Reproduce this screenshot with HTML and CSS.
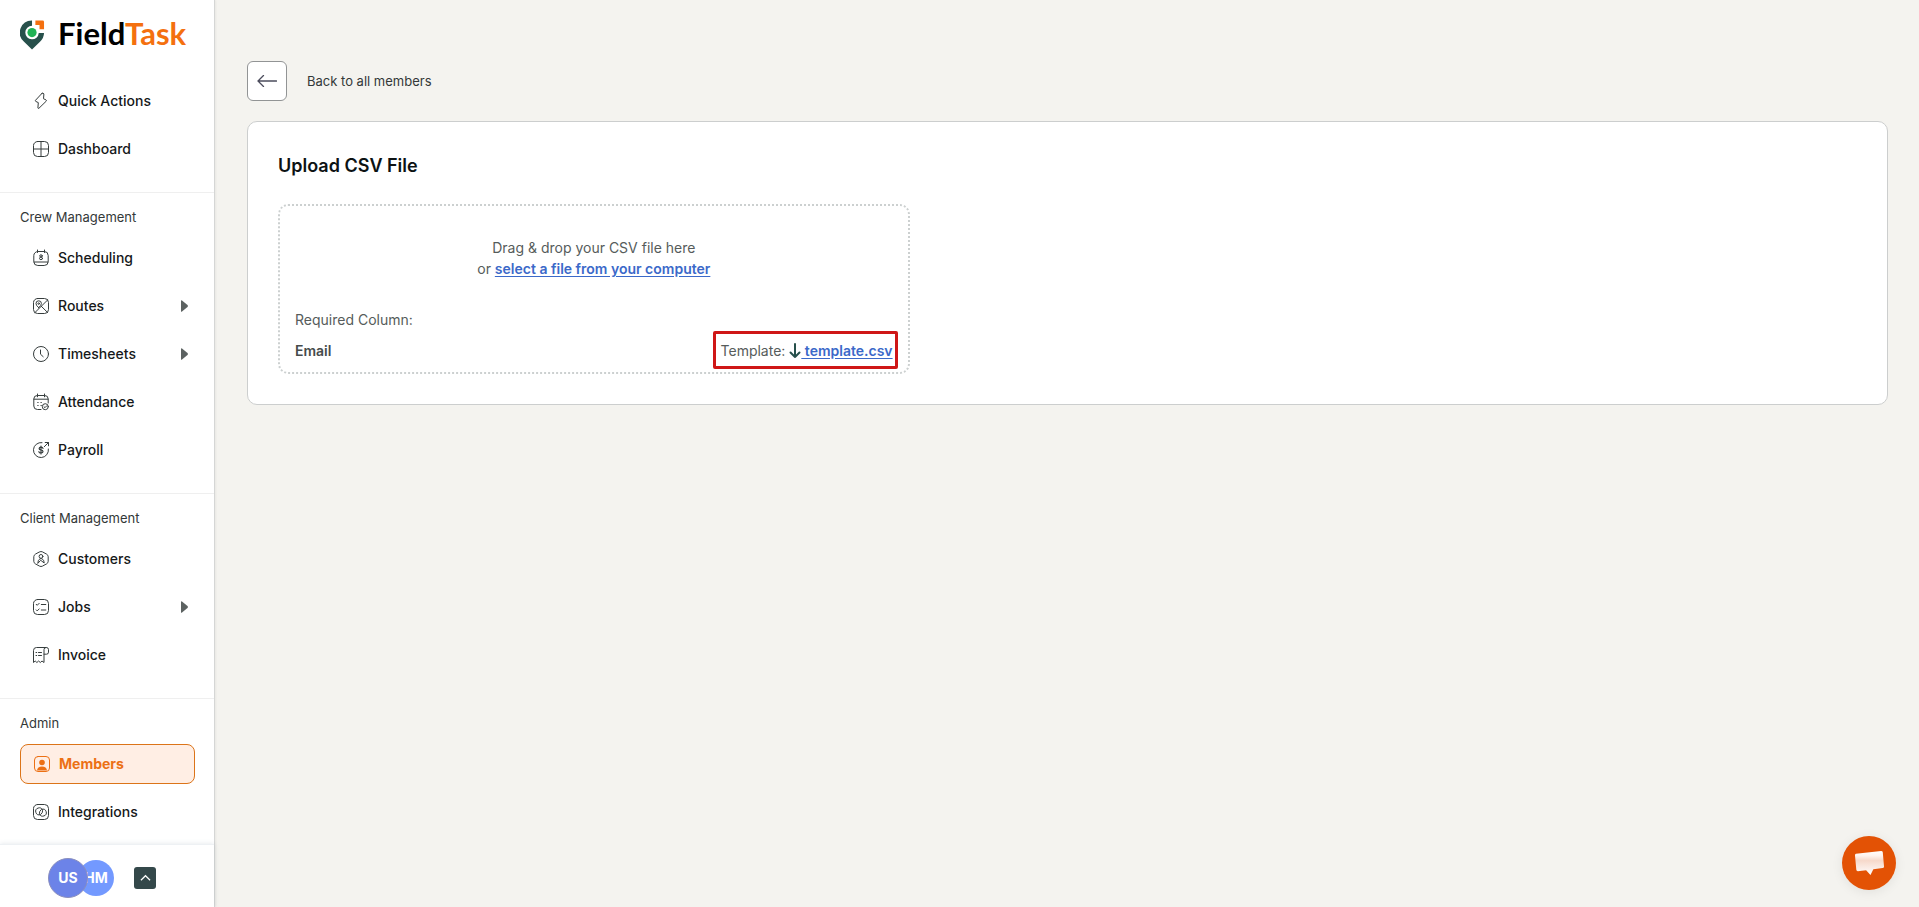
FILE: index.html
```html
<!DOCTYPE html>
<html lang="en">
<head>
<meta charset="utf-8">
<meta name="viewport" content="width=device-width, initial-scale=1">
<title>FieldTask - Upload members</title>
<link rel="stylesheet" href="styles.css">
</head>
<body>
<div class="app">
  <aside class="sidebar">
    <a class="logo" href="#">
      <svg class="logo-mark" viewBox="0 0 26 30" aria-hidden="true">
        <path d="M12.500 0A12.500 12.500 0 0 0 4.200 22L12.500 30l8.300-8A12.500 12.500 0 0 0 25 13h-5.500A7 7 0 1 1 12.500 5.500z" fill="#27504b"/>
        <circle cx="12.500" cy="12.500" r="4.800" fill="#1fb254"/>
        <path d="M16 0h7.500Q25 0 25 1.500V9h-4.700V4.700H16z" fill="#f4700f"/>
      </svg>
      <span class="logo-text">Field<span class="logo-accent">Task</span></span>
    </a>
    <nav class="nav">
      <section class="group">
        <a class="item" href="#">
          <svg class="icon" viewBox="0 0 16 16"><path d="M9 .3 2.500 7.300q-.5.700.2 1.100l2.600 1.200-.4 5.400q.3.900 1.100.2l7.200-7q.6-.7-.1-1.200L10.500 5.700l.4-4.800Q10.200-.7 9 .3z"/></svg>Quick Actions</a>
        <a class="item" href="#">
          <svg class="icon" viewBox="0 0 16 16"><rect x=".5" y=".5" width="15" height="15" rx="4"/><path d="M8 .5v15M.5 8h15"/></svg>Dashboard</a>
      </section>
      <section class="group">
        <h2 class="group-title">Crew Management</h2>
        <a class="item" href="#">
          <svg class="icon" viewBox="0 0 16 16"><rect x=".8" y="1.500" width="14.400" height="14" rx="4"/><path d="M4.500 0v2.500M11.500 0v2.500M1 12h14"/><ellipse cx="8" cy="5.900" rx="1.300" ry="1.100"/><ellipse cx="8" cy="8.400" rx="1.500" ry="1.300"/></svg>Scheduling</a>
        <a class="item" href="#">
          <svg class="icon" viewBox="0 0 16 16"><rect x=".5" y=".5" width="15" height="15" rx="4"/><path d="M2 14.500 14.800 1.800M8.300 8.300l6.300 6.200M5.700 9.700Q2.800 7.300 3 5.500a2.700 2.700 0 0 1 5.400 0Q8.400 7.300 5.700 9.700z"/><circle cx="5.700" cy="5.600" r=".8"/></svg>Routes<svg class="caret" viewBox="0 0 7 12" aria-hidden="true"><path d="M0 1Q0-.3 1 .4L6.500 5q.8 1 0 2L1 11.600Q0 12.300 0 11z"/></svg></a>
        <a class="item" href="#">
          <svg class="icon" viewBox="0 0 16 16"><circle cx="8" cy="8" r="7.500"/><path d="M7.500 4v4.200l2.700 2.500"/></svg>Timesheets<svg class="caret" viewBox="0 0 7 12" aria-hidden="true"><path d="M0 1Q0-.3 1 .4L6.500 5q.8 1 0 2L1 11.600Q0 12.300 0 11z"/></svg></a>
        <a class="item" href="#">
          <svg class="icon" viewBox="0 0 16 16"><path d="M8 15.500H4.500Q.8 15.500.8 12V5q0-3.500 3.500-3.500h7.400q3.500 0 3.500 3.500v4M4.500 0v2.800M11.500 0v2.800M1 5.200h14"/><circle cx="12.300" cy="12.700" r="3"/><path d="m11 12.700 1 1 1.700-1.900"/><path d="M4.800 8.500h.3M8 8.500h.3M4.800 11.500h.3M8 11.500h.3" stroke-width="1.200"/></svg>Attendance</a>
        <a class="item" href="#">
          <svg class="icon" viewBox="0 0 16 16"><path d="M9 .6a7.500 7.500 0 1 0 6.400 6.400M11.300 4.700 15.500.5M12.200.5h3.300v3.300"/><path d="M10 6.300Q9.700 5.200 8 5.200t-1.900 1.400Q6.100 7.900 8 8t2 1.500Q10 11 8 11T5.900 9.700M8 4v8" stroke-width="1.200"/></svg>Payroll</a>
      </section>
      <section class="group">
        <h2 class="group-title">Client Management</h2>
        <a class="item" href="#">
          <svg class="icon" viewBox="0 0 16 16"><path d="M6.500.9q1.500-.8 3 0l4.200 2.300q1.500.9 1.500 2.500v4.600q0 1.600-1.500 2.500l-4.200 2.300q-1.500.8-3 0l-4.200-2.300Q.8 11.900.8 10.300V5.700q0-1.600 1.500-2.500z"/><circle cx="8" cy="5.400" r="1.900"/><path d="M4.800 12q0-3.300 2.300-4.300h1.800q2.300 1 2.300 4.300L8 9.500z"/></svg>Customers</a>
        <a class="item" href="#">
          <svg class="icon" viewBox="0 0 16 16"><rect x=".5" y=".5" width="15" height="15" rx="4"/><path d="m3.200 5.300 1 1 2-2M3.200 10.900l1 1 2-2M8.300 5.500h4.500M8.300 11h4.500"/></svg>Jobs<svg class="caret" viewBox="0 0 7 12" aria-hidden="true"><path d="M0 1Q0-.3 1 .4L6.500 5q.8 1 0 2L1 11.600Q0 12.300 0 11z"/></svg></a>
        <a class="item" href="#">
          <svg class="icon" viewBox="0 0 16 16"><path d="M13 .5H3.500Q.5.500.5 3.500v12l1.700-1.500 1.700 1.500L5.600 14l1.700 1.500L9 14l2 1.500V2.500q0-2 2.300-2t2.200 2.200v2.500q0 2-2 2H11M3 5.500h.7M5.500 5.500h3M3 8.500h.7M5.500 8.500h3"/></svg>Invoice</a>
      </section>
      <section class="group">
        <h2 class="group-title">Admin</h2>
        <a class="item item-active" href="#" aria-current="page">
          <svg class="icon" viewBox="0 0 16 16"><rect x=".5" y=".5" width="15" height="15" rx="3.500"/><circle cx="8" cy="6.500" r="2.800" fill="currentColor" stroke="none"/><path d="M3 14.500q.5-4 5-4t5 4z" fill="currentColor" stroke="none"/></svg>Members</a>
        <a class="item" href="#">
          <svg class="icon" viewBox="0 0 16 16"><rect x=".5" y=".5" width="15" height="15" rx="4"/><path d="M7.300 10.700a3.500 3.500 0 1 1 2.200-4.500q.6 2.200-1.300 3.800M8.700 5.300a3.500 3.500 0 1 1-2.200 4.500q-.6-2.200 1.300-3.800"/></svg>Integrations</a>
      </section>
    </nav>
    <footer class="account">
      <div class="avatars"><span class="avatar avatar-user">US</span><span class="avatar avatar-org">HM</span></div>
      <button class="account-toggle" type="button" aria-label="Account menu">
        <svg viewBox="0 0 12 8" aria-hidden="true"><path d="m1 6.500 5-5 5 5"/></svg>
      </button>
    </footer>
  </aside>
  <main class="main">
    <div class="back">
      <button class="back-button" id="back" type="button" aria-label="Back">
        <svg viewBox="0 0 20 12" aria-hidden="true"><path d="M19.500 6H1M6.500.5 1 6l5.500 5.500"/></svg>
      </button>
      <label for="back">Back to all members</label>
    </div>
    <section class="card">
      <h1 class="card-title">Upload CSV File</h1>
      <div class="dropzone">
        <p class="prompt">Drag &amp; drop your CSV file here<br>or <a class="link" href="#">select a file from your computer</a></p>
        <p class="required">Required Column:</p>
        <div class="columns">
          <strong class="column-name">Email</strong>
          <div class="template">Template:
            <a class="link" href="#"><svg class="download" viewBox="0 0 12 16" aria-hidden="true"><path d="M6 1v13M1.500 9.500 6 14l4.500-4.500"/></svg>&nbsp;template.csv</a>
          </div>
        </div>
      </div>
    </section>
  </main>
  <button class="chat" type="button" aria-label="Open chat">
    <svg viewBox="0 0 32 26" aria-hidden="true">
      <defs><linearGradient id="bubble" x1="0" y1="0" x2="0" y2="1"><stop offset="0" stop-color="#fff"/><stop offset=".2" stop-color="#fff4ee"/><stop offset=".4" stop-color="#f6d9cb"/><stop offset="1" stop-color="#fff"/></linearGradient></defs>
      <path d="M2 3.500 28 .5q1.500 0 1.700 1.500L31 16.500q0 1.500-1.500 1.700L20 19.500l-3 6-4.500-5L4 21.500q-1.500 0-1.600-1.500L1 5q0-1.300 1-1.500z" fill="url(#bubble)"/>
    </svg>
  </button>
</div>
</body>
</html>
```
FILE: styles.css
```css
* { box-sizing: border-box; }

body {
  margin: 0;
  background: #f4f3ef;
  color: #16191a;
  font: 400 14px/20px Inter, "Liberation Sans", sans-serif;
}

h1, h2, p { margin: 0; }

button {
  display: flex;
  align-items: center;
  justify-content: center;
  padding: 0;
  cursor: pointer;
}

svg { flex: none; }

.app { display: flex; height: 100vh; }

.sidebar {
  display: flex;
  flex-direction: column;
  flex: none;
  width: 215px;
  background: #fff;
  border-right: 1px solid #d5d6d5;
  box-shadow: 1px 0 2px rgba(0, 0, 0, .05);
}

.logo {
  display: flex;
  align-items: flex-start;
  gap: 13px;
  flex: none;
  height: 69px;
  padding: 14px 20px 0;
  color: #000;
  text-decoration: none;
}
.logo-mark { width: 25px; height: 30px; margin-top: 6px; }
.logo-text { font: 700 31px/38px Lato, sans-serif; }
.logo-accent { color: #f4700f; }

.nav { flex: 1; min-height: 0; overflow: hidden; padding-top: 12px; }

.group {
  display: flex;
  flex-direction: column;
  gap: 8px;
  padding: 0 19px 23px 20px;
}
.group + .group { border-top: 1px solid #efefef; padding-top: 14px; }

.group-title {
  margin-bottom: 3px;
  color: #333838;
  font-size: 13px;
  font-weight: 400;
  line-height: 20px;
}

.item {
  display: flex;
  align-items: center;
  gap: 9px;
  height: 40px;
  padding: 0 7px 0 13px;
  border-radius: 8px;
  color: #16191a;
  font-weight: 500;
  text-decoration: none;
}
.item-active {
  border: 1px solid #dc7419;
  background: #ffeee4;
  color: #ec7014;
  font-weight: 700;
}

.icon {
  width: 16px;
  height: 16px;
  overflow: visible;
  fill: none;
  stroke: currentColor;
  stroke-linecap: round;
  stroke-linejoin: round;
}
.item:not(.item-active) .icon { stroke: #363d3d; }

.caret { width: 7px; height: 12px; margin-left: auto; fill: #5c6261; }

.account {
  display: flex;
  align-items: center;
  gap: 20px;
  flex: none;
  height: 63px;
  padding: 4px 20px 0 48px;
  border-top: 1px solid #eef1f4;
  background: #fff;
  box-shadow: 0 0 5px rgba(110, 130, 150, .2);
}
.avatars { display: flex; align-items: center; }
.avatar {
  display: flex;
  align-items: center;
  justify-content: center;
  border-radius: 50%;
  color: #fff;
  font-weight: 700;
}
.avatar-user {
  z-index: 1;
  width: 40px;
  height: 40px;
  border: 1px solid #8b8fbd;
  background: #6c83e8;
}
.avatar-org { width: 36px; height: 36px; margin-left: -10px; background: #7399ff; }

.account-toggle {
  width: 22px;
  height: 22px;
  border: 0;
  border-radius: 3px;
  background: #34484a;
}
.account-toggle svg { width: 11px; height: 8px; fill: none; stroke: #fff; stroke-width: 1.3; }

.main { flex: 1; min-width: 0; padding: 61px 31px 32px 32px; }

.back {
  display: flex;
  align-items: center;
  gap: 20px;
  margin-bottom: 20px;
  color: #333838;
  font-size: 13px;
}
.back-button {
  width: 40px;
  height: 40px;
  border: 1px solid #929495;
  border-radius: 6px;
  background: #fff;
}
.back-button svg { width: 20px; height: 12px; fill: none; stroke: #4b4c5c; stroke-width: 1.3; stroke-linecap: round; }

.card {
  padding: 30px;
  border: 1px solid #cccece;
  border-radius: 10px;
  background: #fff;
}
.card-title { margin-bottom: 24px; color: #0c1213; font-size: 18px; font-weight: 600; line-height: 28px; }

.dropzone {
  width: 40%;
  min-width: 420px;
  padding: 31px 15px 11px;
  border: 2px dotted #ccd0d0;
  border-radius: 10px;
  color: #565c5b;
}
.prompt { margin-bottom: 31px; line-height: 21px; text-align: center; }
.required { margin-bottom: 11px; }
.columns { display: flex; justify-content: space-between; }
.column-name { color: #464b4b; font-weight: 600; }
.link { color: #3b69c9; font-weight: 600; text-underline-offset: 2px; }
.download {
  width: 12px;
  height: 16px;
  vertical-align: -3px;
  fill: none;
  stroke: #27504b;
  stroke-width: 2;
  stroke-linecap: round;
  stroke-linejoin: round;
}

.template { position: relative; }
.template::after {
  content: "";
  position: absolute;
  inset: -10px -5px -8px -8px;
  border: 3px solid #cf1717;
  border-radius: 2px;
  pointer-events: none;
}

.chat {
  position: fixed;
  right: 23px;
  bottom: 17px;
  width: 54px;
  height: 54px;
  border: 0;
  border-radius: 50%;
  background: #e35205;
  box-shadow: 0 2px 12px rgba(0, 0, 0, .08);
}
.chat svg { width: 31px; height: 26px; }
```
